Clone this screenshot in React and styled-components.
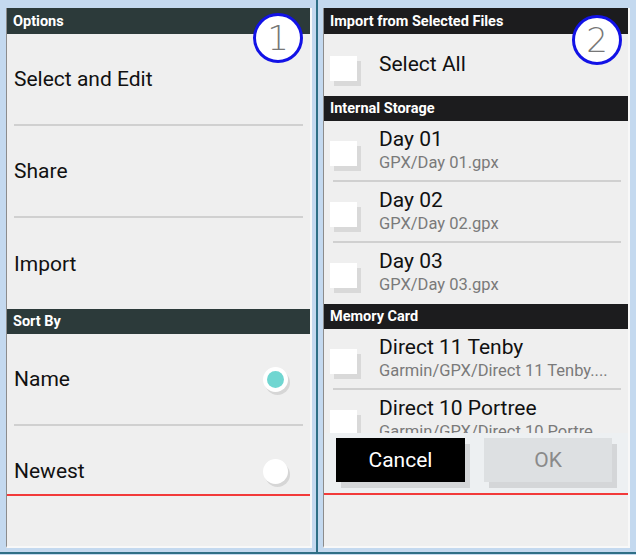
import styled, { createGlobalStyle } from "styled-components"

const GlobalStyle = createGlobalStyle`
  html, body {
    margin: 0;
    padding: 0;
    background: #c4d9ef;
    font-family: Roboto, "Noto Sans", sans-serif;
  }
`

const Page = styled.div`
  width: 636px;
  height: 555px;
  display: flex;
  flex-direction: column;
  background: #c4d9ef;
`
const Frames = styled.div`
  display: flex;
  height: 552px;
`
const Seam = styled.div`
  width: 2px;
  background: #2f6f86;
`
const BottomLine = styled.div`
  height: 2px;
  background: #2f6f86;
`
const Panel = styled.div`
  position: relative;
  width: ${p => p.$w}px;
  box-sizing: border-box;
  padding: 8px ${p => p.$pr}px 4px ${p => p.$pl}px;
`
const Screen = styled.div`
  height: 100%;
  box-sizing: border-box;
  display: flex;
  flex-direction: column;
  background: #efefef;
  border-left: 1px solid #8c8c8c;
  border-right: 2px solid #f8f8f8;
  border-bottom: 2px solid #f8f8f8;
`
const List = styled.div`
  height: ${p => p.$h}px;
  flex: none;
  overflow: hidden;
`
const Header = styled.div`
  height: ${p => p.$h || 25}px;
  box-sizing: border-box;
  display: flex;
  align-items: center;
  padding-left: 6px;
  background: ${p => p.$bg || "#1c1c1e"};
  color: #fff;
  font-weight: bold;
  font-size: 14.5px;
`
const MenuRow = styled.div`
  height: ${p => p.$h || 90}px;
  flex: none;
  display: flex;
  align-items: center;
  justify-content: space-between;
  padding: 0 22px 0 7px;
  font-size: 21px;
  color: #111;
`
const Divider = styled.div`
  height: 2px;
  margin: 0 ${p => p.$r || 7}px 0 ${p => p.$l || 7}px;
  background: #d0d0d0;
`
const Gap = styled.div`
  height: 2px;
`
const Radio = styled.div`
  width: 25px;
  height: 25px;
  border-radius: 50%;
  background: #fff;
  box-shadow: 2px 3px 0 #d6d6d6;
  display: flex;
  align-items: center;
  justify-content: center;
  &::after {
    content: "";
    display: ${p => (p.$on ? "block" : "none")};
    width: 17px;
    height: 17px;
    border-radius: 50%;
    background: #70d6d1;
  }
`
const RedLine = styled.div`
  height: 2px;
  background: #f23a3a;
  flex: none;
`
const Badge = styled.div`
  position: absolute;
  top: ${p => p.$top}px;
  right: ${p => p.$right}px;
  width: 50px;
  height: 50px;
  box-sizing: border-box;
  border: 3px solid #1212e6;
  border-radius: 50%;
  background: #fff;
  display: flex;
  align-items: center;
  justify-content: center;
  font-family: "DejaVu Sans", sans-serif;
  font-weight: 300;
  font-size: 34px;
  color: #777;
`
const FileRow = styled.div`
  height: ${p => p.$h || 59}px;
  display: flex;
  align-items: center;
  padding-left: 6px;
`
const Check = styled.div`
  width: 27px;
  height: 25px;
  flex: none;
  margin-top: 6px;
  background: #fff;
  box-shadow: 4px 5px 0 #d9d9d9;
`
const FileText = styled.div`
  margin-left: 22px;
  display: flex;
  flex-direction: column;
  min-width: 0;
  flex: 1;
  padding-right: 8px;
`
const Title = styled.div`
  font-size: 21px;
  color: #111;
  line-height: 24px;
`
const Sub = styled.div`
  font-size: 16.5px;
  color: #7a7a7a;
  line-height: 24px;
  white-space: nowrap;
  overflow: hidden;
`
const SelectAll = styled.div`
  font-size: 21px;
  color: #111;
  margin-left: 22px;
  margin-bottom: 2px;
`
const ButtonBar = styled.div`
  height: 60px;
  flex: none;
  display: flex;
  gap: 19px;
  padding: 5px 0 0 12px;
  box-sizing: border-box;
  background: #edf0f2;
`
const Button = styled.div`
  width: ${p => p.$w}px;
  height: 44px;
  display: flex;
  align-items: center;
  justify-content: center;
  font-size: 21px;
  background: ${p => (p.$dark ? "#000" : "#dde0e2")};
  color: ${p => (p.$dark ? "#fff" : "#8a8a8a")};
  box-shadow: 5px 6px 0 #d4d6d8;
`

const files = {
  internal: [
    { name: "Day 01", path: "GPX/Day 01.gpx" },
    { name: "Day 02", path: "GPX/Day 02.gpx" },
    { name: "Day 03", path: "GPX/Day 03.gpx" },
  ],
  card: [
    { name: "Direct 11 Tenby", path: "Garmin/GPX/Direct 11 Tenby...." },
    { name: "Direct 10 Portree", path: "Garmin/GPX/Direct 10 Portre...." },
  ],
}

const FileList = ({ items }) =>
  items.map((f, i) => (
    <div key={f.name}>
      <FileRow>
        <Check />
        <FileText>
          <Title>{f.name}</Title>
          <Sub>{f.path}</Sub>
        </FileText>
      </FileRow>
      {i < items.length - 1 ? <Divider $l={9} $r={7} /> : <Gap />}
    </div>
  ))

const App = () => {
  return (
    <Page>
      <GlobalStyle />
      <Frames>
        <Panel $w={316} $pl={6} $pr={4}>
          <Screen>
            <List $h={486}>
              <Header $h={26} $bg="#2c3a3a">Options</Header>
              <MenuRow>Select and Edit</MenuRow>
              <Divider />
              <MenuRow>Share</MenuRow>
              <Divider />
              <MenuRow $h={91}>Import</MenuRow>
              <Header $bg="#2c3a3a">Sort By</Header>
              <MenuRow>
                Name
                <Radio $on />
              </MenuRow>
              <Divider />
              <MenuRow>
                Newest
                <Radio />
              </MenuRow>
            </List>
            <RedLine />
          </Screen>
          <Badge $top={13} $right={13}>1</Badge>
        </Panel>
        <Seam />
        <Panel $w={318} $pl={5} $pr={6}>
          <Screen>
            <Header $h={26}>Import from Selected Files</Header>
            <List $h={399}>
              <FileRow $h={62}>
                <Check />
                <SelectAll>Select All</SelectAll>
              </FileRow>
              <Header>Internal Storage</Header>
              <FileList items={files.internal} />
              <Header>Memory Card</Header>
              <FileList items={files.card} />
            </List>
            <ButtonBar>
              <Button $dark $w={129}>Cancel</Button>
              <Button $w={128}>OK</Button>
            </ButtonBar>
            <RedLine />
          </Screen>
          <Badge $top={15} $right={14}>2</Badge>
        </Panel>
      </Frames>
      <BottomLine />
    </Page>
  )
}

export default App
